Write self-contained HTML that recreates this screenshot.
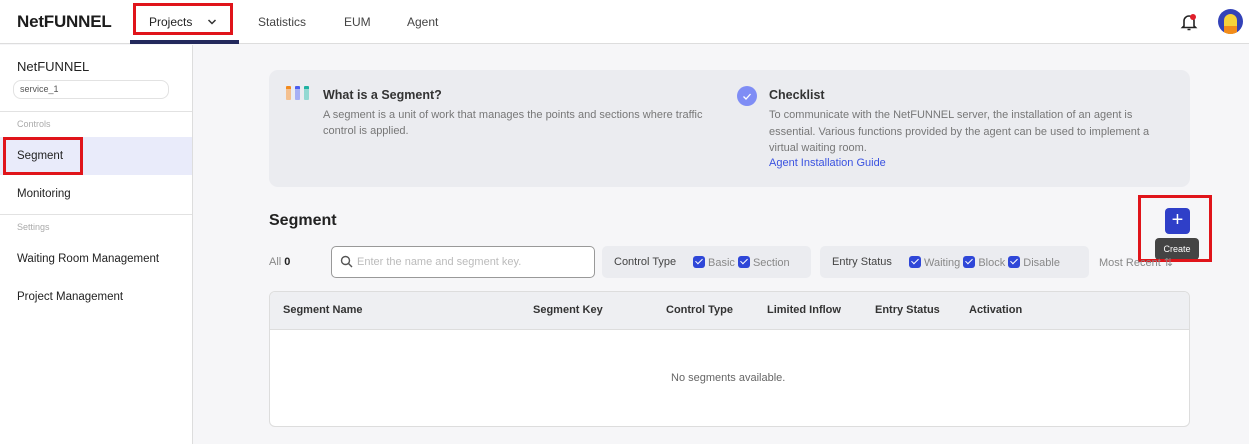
<!DOCTYPE html>
<html><head><meta charset="utf-8"><style>
*{box-sizing:border-box;margin:0;padding:0}
body{width:1249px;height:444px;overflow:hidden;background:#f6f6f8;font-family:"Liberation Sans",sans-serif;color:#222;position:relative;font-size:12px}
.a{position:absolute;white-space:nowrap}
.cb{display:inline-block;width:12px;height:12px;border-radius:3px;background:#2f47d8;vertical-align:-2px;margin-right:3px;position:relative}
.cb:after{content:"";position:absolute;left:4px;top:1px;width:3px;height:6px;border:solid #fff;border-width:0 1.5px 1.5px 0;transform:rotate(45deg)}
.sb{font-size:11.5px}
</style></head><body>
<div class="a" style="left:0;top:0;width:1249px;height:44px;background:#fff;border-bottom:1px solid #ddd"></div>
<div class="a" style="left:17px;top:12px;font-size:17px;font-weight:bold;color:#1c1c1c;letter-spacing:-0.2px">NetFUNNEL</div>
<div class="a" style="left:130px;top:40px;width:109px;height:4px;background:#23295c"></div>
<div class="a" style="left:133px;top:3px;width:100px;height:32px;border:3px solid #e0141a"></div>
<div class="a" style="left:149px;top:15px;font-size:12px;color:#222">Projects</div>
<svg class="a" style="left:207px;top:18px" width="10" height="8"><path d="M1.5 2l3.5 3.5 3.5-3.5" stroke="#333" stroke-width="1.5" fill="none"/></svg>
<div class="a" style="left:258px;top:15px;color:#444">Statistics</div>
<div class="a" style="left:344px;top:15px;color:#444">EUM</div>
<div class="a" style="left:407px;top:15px;color:#444">Agent</div>
<svg class="a" style="left:1180px;top:12px" width="18" height="20"><path d="M4 14V9a5 5 0 0 1 10 0v5l1.5 1.5h-13z" fill="none" stroke="#222" stroke-width="1.6"/><path d="M7.5 17.5h3" stroke="#222" stroke-width="1.5"/><circle cx="13" cy="5" r="3" fill="#e01e2a"/></svg>
<div class="a" style="left:1218px;top:9px;width:25px;height:25px;border-radius:50%;background:#3342b8;overflow:hidden"><div class="a" style="left:6px;top:5px;width:13px;height:20px;border-radius:7px 7px 0 0;background:#f6d23a"></div><div class="a" style="left:6px;top:17px;width:13px;height:8px;background:#f28c1a"></div></div>

<div class="a" style="left:0;top:45px;width:193px;height:399px;background:#fff;border-right:1px solid #ddd"></div>
<div class="a" style="left:17px;top:59px;font-size:13px;color:#222">NetFUNNEL</div>
<div class="a" style="left:13px;top:80px;width:156px;height:19px;border:1px solid #e2e2e2;border-radius:8px;font-size:9px;color:#555;padding:3px 6px">service_1</div>
<div class="a" style="left:0;top:111px;width:192px;border-top:1px solid #e2e2e2"></div>
<div class="a" style="left:17px;top:119px;font-size:9px;color:#aaa">Controls</div>
<div class="a" style="left:0;top:137px;width:192px;height:38px;background:#e9ebfa"></div>
<div class="a" style="left:3px;top:137px;width:80px;height:38px;border:3px solid #e0141a"></div>
<div class="a sb" style="left:17px;top:150px;color:#222">Segment</div>
<div class="a sb" style="left:17px;top:188px;color:#222">Monitoring</div>
<div class="a" style="left:0;top:214px;width:192px;border-top:1px solid #e2e2e2"></div>
<div class="a" style="left:17px;top:222px;font-size:9px;color:#aaa">Settings</div>
<div class="a sb" style="left:17px;top:253px;color:#222">Waiting Room Management</div>
<div class="a sb" style="left:17px;top:291px;color:#222">Project Management</div>

<div class="a" style="left:269px;top:70px;width:921px;height:117px;background:#ebecf0;border-radius:9px"></div>
<div class="a" style="left:286px;top:86px;width:5px;height:14px;background:#f4c08f;border-radius:1px;border-top:3px solid #f28a1e"></div>
<div class="a" style="left:295px;top:86px;width:5px;height:14px;background:#a7b0f4;border-radius:1px;border-top:3px solid #4a5ef0"></div>
<div class="a" style="left:304px;top:86px;width:5px;height:14px;background:#93d9d2;border-radius:1px;border-top:3px solid #20b2a2"></div>
<div class="a" style="left:323px;top:88px;font-size:12.5px;font-weight:bold;color:#333">What is a Segment?</div>
<div class="a" style="left:323px;top:107px;font-size:11px;color:#777;line-height:16px">A segment is a unit of work that manages the points and sections where traffic<br>control is applied.</div>
<div class="a" style="left:737px;top:86px;width:20px;height:20px;border-radius:50%;background:#7f8df5"></div>
<svg class="a" style="left:737px;top:86px" width="20" height="20"><path d="M6.5 10.5l2.5 2.5 4.5-5" stroke="#fff" stroke-width="1.3" fill="none"/></svg>
<div class="a" style="left:769px;top:88px;font-size:12.5px;font-weight:bold;color:#333">Checklist</div>
<div class="a" style="left:769px;top:107px;font-size:11px;color:#777;line-height:16.5px">To communicate with the NetFUNNEL server, the installation of an agent is<br>essential. Various functions provided by the agent can be used to implement a<br>virtual waiting room.</div>
<div class="a" style="left:769px;top:157px;font-size:11px;color:#3a52e0">Agent Installation Guide</div>

<div class="a" style="left:269px;top:212px;font-size:16px;font-weight:bold;color:#222">Segment</div>
<div class="a" style="left:1165px;top:208px;width:25px;height:26px;background:#2f3fc8;border-radius:4px;color:#fff;font-size:20px;text-align:center;line-height:25px">+</div>
<div class="a" style="left:1155px;top:238px;width:44px;height:22px;background:#444;border-radius:4px;color:#fff;font-size:9px;text-align:center;line-height:22px">Create</div>
<div class="a" style="left:1138px;top:195px;width:74px;height:67px;border:3px solid #e0141a"></div>

<div class="a" style="left:269px;top:256px;font-size:11px;color:#888">All <b style="color:#222">0</b></div>
<div class="a" style="left:331px;top:246px;width:264px;height:32px;border:1px solid #999;border-radius:5px;background:#fff"></div>
<svg class="a" style="left:340px;top:255px" width="13" height="13"><circle cx="5.5" cy="5.5" r="4" stroke="#555" stroke-width="1.4" fill="none"/><path d="M8.5 8.5l3.5 3.5" stroke="#555" stroke-width="1.4"/></svg>
<div class="a" style="left:357px;top:256px;font-size:11px;color:#bbb">Enter the name and segment key.</div>
<div class="a" style="left:602px;top:246px;width:209px;height:32px;background:#ebecf0;border-radius:5px"></div>
<div class="a" style="left:614px;top:256px;font-size:11px;color:#444">Control Type</div>
<div class="a" style="left:693px;top:256px;font-size:11px;color:#888"><span class="cb"></span>Basic <span class="cb"></span>Section</div>
<div class="a" style="left:820px;top:246px;width:269px;height:32px;background:#ebecf0;border-radius:5px"></div>
<div class="a" style="left:832px;top:256px;font-size:11px;color:#444">Entry Status</div>
<div class="a" style="left:909px;top:256px;font-size:11px;color:#888"><span class="cb"></span>Waiting <span class="cb"></span>Block <span class="cb"></span>Disable</div>
<div class="a" style="left:1099px;top:256px;font-size:11px;color:#888">Most Recent ⇅</div>

<div class="a" style="left:269px;top:291px;width:921px;height:136px;background:#fff;border:1px solid #ddd;border-radius:6px;overflow:hidden"><div class="a" style="left:0;top:0;width:921px;height:38px;background:#eeeff2;border-bottom:1px solid #ddd"></div></div>
<div class="a" style="left:283px;top:304px;font-size:11px;color:#333;font-weight:bold">Segment Name</div>
<div class="a" style="left:533px;top:304px;font-size:11px;color:#333;font-weight:bold">Segment Key</div>
<div class="a" style="left:666px;top:304px;font-size:11px;color:#333;font-weight:bold">Control Type</div>
<div class="a" style="left:767px;top:304px;font-size:11px;color:#333;font-weight:bold">Limited Inflow</div>
<div class="a" style="left:875px;top:304px;font-size:11px;color:#333;font-weight:bold">Entry Status</div>
<div class="a" style="left:969px;top:304px;font-size:11px;color:#333;font-weight:bold">Activation</div>
<div class="a" style="left:671px;top:372px;font-size:11px;color:#666">No segments available.</div>
</body></html>
